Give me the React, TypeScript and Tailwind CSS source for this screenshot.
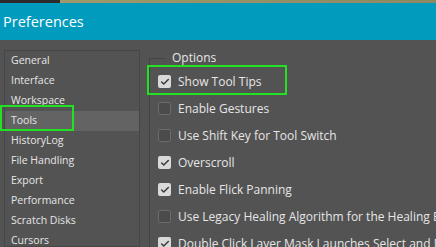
import { Check } from "lucide-react";

const sections = [
  "General",
  "Interface",
  "Workspace",
  "Tools",
  "HistoryLog",
  "File Handling",
  "Export",
  "Performance",
  "Scratch Disks",
  "Cursors",
];

const options = [
  { label: "Show Tool Tips", on: true },
  { label: "Enable Gestures", on: false },
  { label: "Use Shift Key for Tool Switch", on: false },
  { label: "Overscroll", on: true },
  { label: "Enable Flick Panning", on: true },
  { label: "Use Legacy Healing Algorithm for the Healing Brush", on: false },
  { label: "Double Click Layer Mask Launches Select and Mask", on: true },
];

function Box({ on }: { on: boolean }) {
  if (on) {
    return (
      <span className="flex h-[13px] w-[13px] shrink-0 items-center justify-center rounded-[2px] bg-[#d9d9d9]">
        <Check size={10} strokeWidth={3.5} className="text-[#3a3a3a]" />
      </span>
    );
  }
  return <span className="h-[13px] w-[13px] shrink-0 rounded-[2px] border border-[#6b6b6b] bg-[#4b4b4b]" />;
}

export default function App() {
  return (
    <div
      className="relative flex h-[247px] w-[436px] flex-col overflow-hidden bg-[#535353] text-[#e6e6e6]"
      style={{ fontFamily: '"Open Sans", "Noto Sans", sans-serif' }}
    >
      <div className="flex h-[3px] shrink-0">
        <div className="w-[60px] bg-[#2b2b2b]" />
        <div className="flex-1 bg-gradient-to-r from-[#9f996a] to-[#8d8a62]" />
      </div>
      <div className="flex h-[37px] shrink-0 items-center bg-[#009bbd] pl-[3px] text-[14.5px] text-white">
        Preferences
      </div>

      <div className="flex min-h-0 flex-1 pl-[4px] pt-[10px]">
        <div className="flex w-[136px] shrink-0 flex-col border border-[#464646]">
          {sections.map((s) => (
            <div
              key={s}
              className={`flex h-[20px] shrink-0 items-center pl-[6px] text-[10.5px] ${s === "Tools" ? "bg-[#636363]" : ""}`}
            >
              {s}
            </div>
          ))}
        </div>

        <div className="ml-[9px] mt-[8px] flex flex-1 flex-col border-l border-[#444444]">
          <div className="flex h-[10px] shrink-0 items-start">
            <div className="w-[16px] border-t border-[#444444]" />
            <span className="-mt-[9px] ml-[6px] text-[12px] leading-[18px]">Options</span>
          </div>
          {options.map((o) => (
            <div
              key={o.label}
              className="flex h-[27px] shrink-0 items-center gap-[7px] whitespace-nowrap pl-[8px] text-[12px]"
            >
              <Box on={o.on} />
              <span>{o.label}</span>
            </div>
          ))}
        </div>
      </div>

      {/* annotation boxes */}
      <div className="absolute left-0 top-[105px] h-[26px] w-[74px] border-2 border-[#22e022]" />
      <div className="absolute left-[147px] top-[65px] h-[30px] w-[140px] border-2 border-[#22e022]" />
    </div>
  );
}
